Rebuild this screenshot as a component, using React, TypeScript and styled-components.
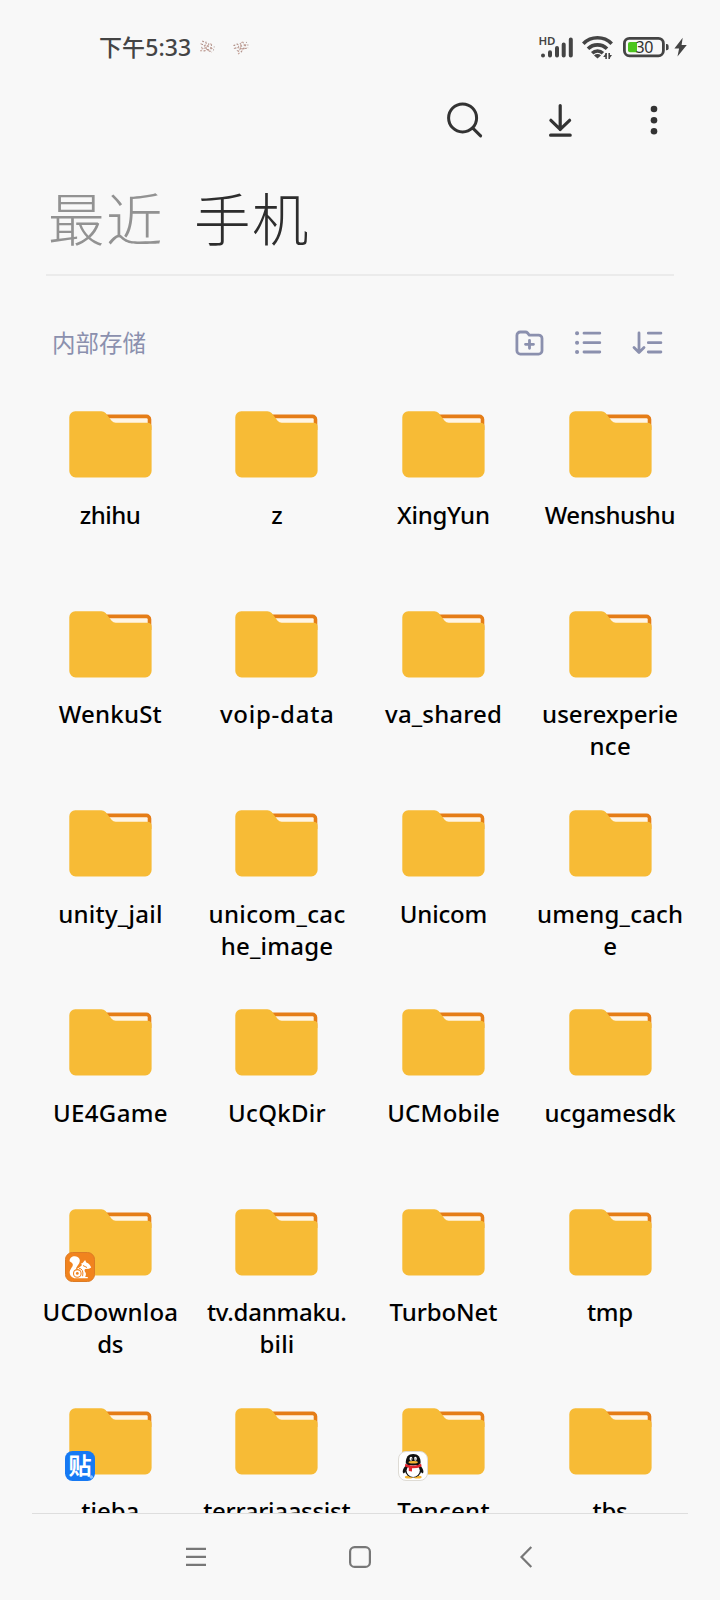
import React from 'react';
import styled, { createGlobalStyle } from 'styled-components';

const GlobalStyle = createGlobalStyle`
  * { box-sizing: border-box; }
  html, body { margin: 0; padding: 0; background: #f8f8f8; }
  svg { display: block; flex: none; overflow: visible; }
`;

const Screen = styled.div`
  width: 720px;
  height: 1600px;
  display: flex;
  flex-direction: column;
  overflow: hidden;
  background: #f8f8f8;
  color: #000;
  font-family: 'Noto Sans', 'Noto Sans CJK SC', sans-serif;
`;

const StatusBar = styled.div`
  height: 92px;
  flex: none;
  display: flex;
  align-items: center;
  padding: 2px 33px 0 99px;
  color: #444;
`;

const Clock = styled.span`
  font-size: 23px;
  line-height: 30px;
  font-weight: 500;
  letter-spacing: 0.1px;
  white-space: nowrap;
`;

const Notices = styled.div`
  display: flex;
  gap: 17px;
  margin-left: 8px;
`;

const StatusIcons = styled.div`
  display: flex;
  margin-left: auto;
  align-items: center;
`;

const Gap = styled.span<{ $size: number }>`
  width: ${(p) => p.$size}px;
`;

const Toolbar = styled.div`
  height: 56px;
  flex: none;
  display: flex;
  justify-content: flex-end;
  align-items: center;
  gap: 46.500px;
  padding-right: 42px;
  color: #333;
`;

const ToolButton = styled.button`
  width: 48px;
  height: 48px;
  padding: 0;
  border: 0;
  background: none;
  color: inherit;
  display: grid;
  place-items: center;
`;

const Tabs = styled.div`
  height: 128px;
  flex: none;
  margin: 0 46px;
  padding: 28px 0 0 2px;
  border-bottom: 2px solid #ebebeb;
  display: flex;
  gap: 30px;
`;

const Tab = styled.span<{ $active?: boolean }>`
  font-family: 'Noto Sans CJK SC', sans-serif;
  font-size: 56.500px;
  line-height: 80px;
  font-weight: 300;
  letter-spacing: 1.500px;
  color: ${(p) => (p.$active ? '#2d2d2d' : '#929292')};
`;

const Section = styled.div`
  height: 135px;
  flex: none;
  display: flex;
  align-items: center;
  padding: 0 58px 2px 52px;
  color: #8b90ae;
`;

const SectionTitle = styled.span`
  font-family: 'Noto Sans CJK SC', sans-serif;
  font-size: 23.500px;
  line-height: 32px;
  padding-bottom: 1px;
`;

const SectionActions = styled.div`
  display: flex;
  margin-left: auto;
  gap: 30px;
`;

const Files = styled.div`
  height: 1102px;
  flex: none;
  overflow: hidden;
  display: grid;
  grid-template-columns: repeat(4, 166.600px);
  grid-auto-rows: 199.300px;
  padding: 0.400px 0 0 27px;
`;

const FileCell = styled.div`
  display: flex;
  flex-direction: column;
  align-items: center;
`;

const FolderBox = styled.div`
  position: relative;
  width: 83px;
  height: 67px;
`;

const Badge = styled.div`
  position: absolute;
  left: -4px;
  bottom: -6.500px;
`;

const Name = styled.div`
  margin-top: 20.600px;
  display: flex;
  flex-direction: column;
  align-items: center;
  font-size: 24px;
  line-height: 32px;
  font-weight: 500;
  white-space: nowrap;
`;

const NameLine = styled.span<{ $tracking: number }>`
  letter-spacing: ${(p) => p.$tracking}px;
  margin-right: ${(p) => -p.$tracking}px;
`;

const NavBar = styled.div`
  flex: 1;
  margin: 0 32px;
  border-top: 1px solid #dedede;
  display: flex;
  justify-content: center;
  gap: 134px;
  padding-top: 27px;
  color: #777;
`;

const NavButton = styled(ToolButton)`
  width: 32px;
  height: 32px;
`;

const RecentsButton = styled(NavButton)`
  padding-left: 3px;
`;

const NoticeDots = ({ slanted }: { slanted?: boolean }) => (
  <svg width="17" height="16" viewBox="0 0 17 16" fill="none" strokeWidth="1">
    <g transform={slanted ? 'rotate(-28 8 8)' : 'rotate(12 8 8)'}>
      <path stroke="#c09a90" strokeDasharray="2 1.600" d="M2 3l4 1 2 3 6 1M1 6l4 1 4 4 5 1M3 11l4-2 3-5 4 1M2 13l5-1 7-4" />
      <path stroke="#a58d88" strokeDasharray="1 2" d="M3 3v9M6 3v10M9 4v9M12 5v8M15 6v6" />
    </g>
  </svg>
);

const Signal = () => (
  <svg width="35" height="24" viewBox="0 0 35 24">
    <text x="-0.500" y="10" fontFamily="Noto Sans, sans-serif" fontSize="11.500" fontWeight="600" fill="#444" textLength="17">HD</text>
    <g stroke="#444" strokeWidth="4" strokeLinecap="round">
      <path d="M4 20.500v-.1M11 20.500v-3.300M18 20.500v-7.500M24.700 20.500V9.500M31.800 20.500V4.400" />
    </g>
  </svg>
);

const Wifi = () => (
  <svg width="31" height="24" viewBox="0 0 31 24" fill="none" stroke="#444" strokeWidth="3.600">
    <path d="M1.300 8.700a20 20 0 0 1 28.400 0M6 13.700a13.600 13.600 0 0 1 19 0M10.200 18.200a7.700 7.700 0 0 1 10.700 0" />
    <path d="M12 20.400a5 5 0 0 1 7 0l-3.500 3.200z" fill="#444" stroke="none" />
    <path d="M24.100 18v6M27.200 18v6" strokeWidth="1.600" />
    <path d="M21.200 22l2.900-4v4zM30 20l-2.800 4v-4z" fill="#444" stroke="none" />
  </svg>
);

const Battery = () => (
  <svg width="46" height="20" viewBox="0 0 46 20">
    <rect x="1.400" y="1.400" width="39" height="17.400" rx="5" fill="none" stroke="#444" strokeWidth="2.800" />
    <path d="M7 5h7v10.200H7a2 2 0 0 1-2-2V7a2 2 0 0 1 2-2z" fill="#4cc51e" />
    <path d="M43 7h.6a2 2 0 0 1 2 2v2.200a2 2 0 0 1-2 2H43z" fill="#444" />
    <text x="12.500" y="15.800" fontFamily="Noto Sans, sans-serif" fontSize="16" fill="#333" textLength="18">30</text>
  </svg>
);

const Bolt = () => (
  <svg width="13" height="20" viewBox="0 0 13 20">
    <path d="M8.700 .8L.4 11.600h4.700L3.500 19.500 12.800 8H7.600z" fill="#444" />
  </svg>
);

const SearchIcon = () => (
  <svg width="36" height="36" viewBox="0 0 36 36" fill="none" stroke="currentColor" strokeWidth="3" strokeLinecap="round">
    <circle cx="15.600" cy="15.900" r="14" />
    <path d="M25.800 26.100l7.800 7.800" />
  </svg>
);

const DownloadIcon = () => (
  <svg width="24" height="34" viewBox="0 0 24 34" fill="none" stroke="currentColor" strokeWidth="3.200" strokeLinecap="round" strokeLinejoin="round">
    <path d="M12.200 2.600v24M2.900 17.300l9.300 9 9.400-9M2.600 32.200h19.600" />
  </svg>
);

const MoreIcon = () => (
  <svg width="8" height="30" viewBox="0 0 8 30" fill="currentColor">
    <circle cx="4" cy="4" r="3.300" />
    <circle cx="4" cy="15.200" r="3.300" />
    <circle cx="4" cy="26.300" r="3.300" />
  </svg>
);

const lineProps = {
  width: 29,
  height: 26,
  viewBox: '0 0 29 26',
  fill: 'none',
  stroke: 'currentColor',
  strokeWidth: 2.8,
  strokeLinecap: 'round' as const,
  strokeLinejoin: 'round' as const,
};

const NewFolderIcon = () => (
  <svg {...lineProps}>
    <path d="M5.300 2h5.100q1.300 0 2.200 1l1.700 2.100h9.300a3.400 3.400 0 0 1 3.400 3.400v12.200a3.400 3.400 0 0 1-3.400 3.400H5.300a3.400 3.400 0 0 1-3.400-3.400V5.400A3.400 3.400 0 0 1 5.300 2zM14.500 10.300v8M10.500 14.300h8" />
  </svg>
);

const ListIcon = () => (
  <svg {...lineProps}>
    <path d="M10 3.200h15.800M10 12.700h15.800M10 22h15.800" />
    <path strokeWidth="4" d="M3 3.200h.1M3 12.700h.1M3 22h.1" />
  </svg>
);

const SortIcon = () => (
  <svg {...lineProps}>
    <path d="M6 3v19M1 17.600l5 5 5-5M15.300 3.200h12.600M15.300 12.700h12.600M15.300 22h12.600" />
  </svg>
);

const Folder = () => (
  <svg width="83" height="67" viewBox="0 0 83 67">
    <path d="M35 3.500h42.300a5 5 0 0 1 5 5V19H35z" fill="#e57d17" />
    <path d="M38 7.200h39.500q1.200 0 1.200 1.200V16H38z" fill="#fff5e5" />
    <path d="M6.300 .3h26q2.500 0 4.300 1.700l6 7.800q1.700 2 4.200 2h31.600q4.200 0 4.200 4V60a6.400 6.400 0 0 1-6.400 6.400H6.800A6.400 6.400 0 0 1 .3 60V6.300A6 6 0 0 1 6.300 .3z" fill="#f7bb36" />
  </svg>
);

const UcBadge = () => (
  <svg width="30" height="30" viewBox="0 0 30 30">
    <rect x=".5" y=".5" width="29" height="29" rx="7" fill="#f1831e" stroke="#dc7c25" />
    <path fill="#fff" d="M4.600 9.200C4.600 5.500 7.200 4 10 4.200c4.300.3 5.800 3.600 4.200 7-1.200 2.500-3.500 4-3.200 6.500 1.400-1.800 4-2.300 6-4.800-.8-.4-.9-1-.6-1.700 1 .2 1.700-.6 2.200-1.500l1.500-1.600 1.200 2.300c2.600.9 4.100 2.700 4.900 5.100l-2.200 1.300-3.600.2c-1.600.6-.6 2.400.1 3.500.8 1.500.3 2.900-.3 4.400h2.600v1.300H9.300C4.500 25.200 3.400 20 6.100 16.400c2.500-3.300 2.600-5-1.500-7.200z" />
    <circle cx="12.300" cy="21.400" r="3.800" fill="none" stroke="#f1831e" strokeWidth="1.100" />
    <circle cx="12.300" cy="21.400" r="1.400" fill="#f1831e" />
    <path d="M14 16.200q5 .8 3.600 8M18 13.500l4 2" stroke="#f1831e" fill="none" />
  </svg>
);

const TiebaBadge = () => (
  <svg width="30" height="30" viewBox="0 0 30 30">
    <rect width="30" height="30" rx="7.500" fill="#1679f3" />
    <text x="3.500" y="22.500" fontFamily="Noto Sans CJK SC, sans-serif" fontSize="23" fontWeight="700" fill="#fff">贴</text>
    <circle cx="26.300" cy="26" r="1.800" fill="#8dc0ff" />
  </svg>
);

const QqBadge = () => (
  <svg width="30" height="30" viewBox="0 0 30 30">
    <rect x=".5" y=".5" width="29" height="29" rx="7.500" fill="#fff" stroke="#dedbd5" />
    <ellipse cx="10.800" cy="26" rx="4" ry="1.600" fill="#f7b531" />
    <ellipse cx="19.700" cy="26" rx="4" ry="1.600" fill="#f7b531" />
    <path d="M8 14Q3 20 5.500 22.500q2-1 3-3M22 14q5 6 2.800 8.500-2-1-3-3" fill="#111" />
    <ellipse cx="15.200" cy="18.700" rx="8.200" ry="7.800" fill="#111" />
    <ellipse cx="15.200" cy="19.600" rx="6.600" ry="6.300" fill="#fff" />
    <path d="M7.800 12.500C7.500 6 10.500 3 15.200 3s7.700 3 7.400 9.500q-7.400 4-14.800 0z" fill="#111" />
    <ellipse cx="13" cy="7.800" rx="1.400" ry="2" fill="#fff" />
    <ellipse cx="17.400" cy="7.800" rx="1.400" ry="2" fill="#fff" />
    <circle cx="13.400" cy="8" r=".6" />
    <circle cx="17" cy="8" r=".6" />
    <ellipse cx="15.200" cy="11.300" rx="4.700" ry="1.300" fill="#f7b531" />
    <path d="M7.300 12.700q7.900 4 15.800 0l.5 2.700q-4.500 2-9.600 1.900v3.100l-3.200-.4v-3.200l-3.800-1.400z" fill="#e0242b" />
  </svg>
);

const badges = { uc: UcBadge, tieba: TiebaBadge, qq: QqBadge };

// Each line is its text followed by an optional letter-spacing in pixels.
type Entry = { lines: [string, number?][]; badge?: keyof typeof badges };

const entries: Entry[] = [
  { lines: [['zhihu', -0.5]] },
  { lines: [['z']] },
  { lines: [['XingYun', -0.25]] },
  { lines: [['Wenshushu', -0.45]] },
  { lines: [['WenkuSt', 0.2]] },
  { lines: [['voip-data', 0.75]] },
  { lines: [['va_shared', 0.15]] },
  { lines: [['userexperie', 0.05], ['nce', 0.3]] },
  { lines: [['unity_jail', 0.25]] },
  { lines: [['unicom_cac', 0.35], ['he_image', 0.2]] },
  { lines: [['Unicom', -0.2]] },
  { lines: [['umeng_cach', 0.2], ['e']] },
  { lines: [['UE4Game', 0.35]] },
  { lines: [['UcQkDir', 0.3]] },
  { lines: [['UCMobile', 0.2]] },
  { lines: [['ucgamesdk', -0.1]] },
  { lines: [['UCDownloa', 0.2], ['ds', -0.4]], badge: 'uc' },
  { lines: [['tv.danmaku.', -0.25], ['bili', 0.2]] },
  { lines: [['TurboNet', -0.1]] },
  { lines: [['tmp', -0.3]] },
  { lines: [['tieba']], badge: 'tieba' },
  { lines: [['terrariaassist', -0.3]] },
  { lines: [['Tencent', 0.3]], badge: 'qq' },
  { lines: [['tbs', -0.2]] },
];

const FileItem = ({ lines, badge }: Entry) => {
  const BadgeIcon = badge && badges[badge];
  return (
    <FileCell>
      <FolderBox>
        <Folder />
        {BadgeIcon && <Badge><BadgeIcon /></Badge>}
      </FolderBox>
      <Name>
        {lines.map(([text, tracking = 0]) => (
          <NameLine key={text} $tracking={tracking}>{text}</NameLine>
        ))}
      </Name>
    </FileCell>
  );
};

export default function App() {
  return (
    <Screen>
      <GlobalStyle />
      <StatusBar>
        <Clock>下午5:33</Clock>
        <Notices><NoticeDots /><NoticeDots slanted /></Notices>
        <StatusIcons>
          <Signal />
          <Gap $size={8} />
          <Wifi />
          <Gap $size={10} />
          <Battery />
          <Gap $size={5} />
          <Bolt />
        </StatusIcons>
      </StatusBar>
      <Toolbar>
        <ToolButton aria-label="Search"><SearchIcon /></ToolButton>
        <ToolButton aria-label="Downloads"><DownloadIcon /></ToolButton>
        <ToolButton aria-label="More"><MoreIcon /></ToolButton>
      </Toolbar>
      <Tabs>
        <Tab>最近</Tab>
        <Tab $active>手机</Tab>
      </Tabs>
      <Section>
        <SectionTitle>内部存储</SectionTitle>
        <SectionActions><NewFolderIcon /><ListIcon /><SortIcon /></SectionActions>
      </Section>
      <Files>
        {entries.map((entry) => <FileItem key={entry.lines[0][0]} {...entry} />)}
      </Files>
      <NavBar>
        <RecentsButton aria-label="Recents">
          <svg width="20" height="20" viewBox="0 0 20 20" stroke="currentColor" strokeWidth="2.200"><path d="M0 1.800h20M0 9.800h20M0 17.800h20" /></svg>
        </RecentsButton>
        <NavButton aria-label="Home">
          <svg width="22" height="22" viewBox="0 0 22 22" fill="none" stroke="currentColor" strokeWidth="2.200"><rect x="1.100" y="1.100" width="19.800" height="19.800" rx="4.500" /></svg>
        </NavButton>
        <NavButton aria-label="Back">
          <svg width="12" height="22" viewBox="0 0 12 22" fill="none" stroke="currentColor" strokeWidth="2.200"><path d="M11.300 1L1.500 11l9.800 10" /></svg>
        </NavButton>
      </NavBar>
    </Screen>
  );
}
